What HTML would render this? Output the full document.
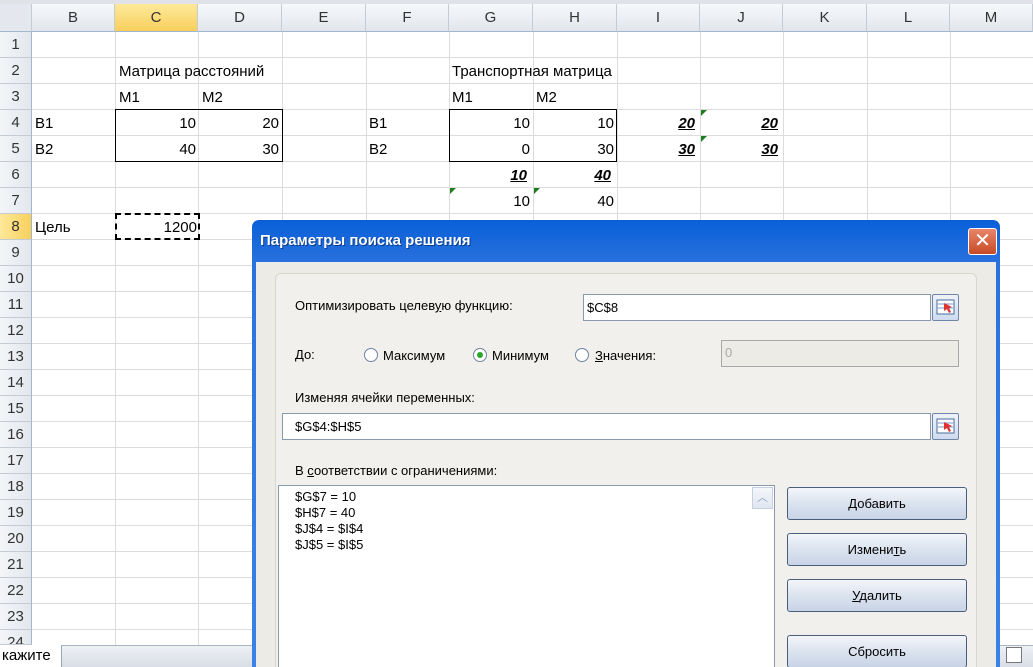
<!DOCTYPE html>
<html><head><meta charset="utf-8"><style>
*{box-sizing:border-box;margin:0;padding:0}
html,body{width:1033px;height:667px;overflow:hidden}
body{background:#fff;position:relative;font-family:"Liberation Sans","DejaVu Sans",sans-serif}
.a{position:absolute}
.hd{position:absolute;top:4px;height:28px;background:linear-gradient(#f6f8fb,#e2e6ec);border-right:1px solid #c5cbd3;border-bottom:1px solid #9eb6ce;font-size:15px;color:#333;text-align:center;line-height:28px}
.rn{position:absolute;left:0;width:32px;height:26px;background:linear-gradient(90deg,#f3f5f8,#e3e7ed);border-bottom:1px solid #c5cbd3;border-right:1px solid #9eb6ce;font-size:15px;color:#333;text-align:center;line-height:26px}
.vl{position:absolute;top:32px;height:613px;width:1px;background:#dadcdd}
.hl{position:absolute;left:32px;right:0;height:1px;background:#dadcdd}
.c{position:absolute;font-size:15px;color:#000;height:26px;line-height:27px;white-space:nowrap}
.r{text-align:right}
.bu{font-weight:bold;font-style:italic;text-decoration:underline}
.tri{position:absolute;width:0;height:0;border-top:6px solid #1e7b1e;border-right:6px solid transparent}
.d{font-family:"Liberation Sans Narrow","Liberation Sans",sans-serif;font-size:13px;color:#000;position:absolute;white-space:nowrap}
.inp{position:absolute;background:#fff;border:1px solid #8a9aae}
.btn{position:absolute;left:787px;width:180px;height:33px;border:1px solid #4a5e7c;border-radius:3px;background:linear-gradient(#f3f6fb,#dbe3ef 50%,#c8d4e6);text-align:center;line-height:31px}
.ico{position:absolute;width:27px;height:27px;border:1px solid #6f86a8;background:linear-gradient(#eef3fa,#cfdcee);border-radius:2px}
.rad{position:absolute;width:14px;height:14px;border:1px solid #6f84a0;border-radius:50%;background:#fff}
</style></head><body>
<div class="hd" style="left:0;width:32px;background:#e4e8ee"></div>
<div class="hd" style="left:32px;width:83px">B</div>
<div class="hd" style="left:115px;width:83px;background:linear-gradient(#fde99a,#f8cf5c)">C</div>
<div class="hd" style="left:198px;width:84px">D</div>
<div class="hd" style="left:282px;width:84px">E</div>
<div class="hd" style="left:366px;width:83px">F</div>
<div class="hd" style="left:449px;width:84px">G</div>
<div class="hd" style="left:533px;width:84px">H</div>
<div class="hd" style="left:617px;width:83px">I</div>
<div class="hd" style="left:700px;width:83px">J</div>
<div class="hd" style="left:783px;width:84px">K</div>
<div class="hd" style="left:867px;width:83px">L</div>
<div class="hd" style="left:950px;width:83px">M</div>
<div class="a" style="left:0;top:0;width:1033px;height:4px;background:#dfe3e8"></div>
<div class="vl" style="left:115px"></div><div class="vl" style="left:198px"></div><div class="vl" style="left:282px"></div><div class="vl" style="left:366px"></div><div class="vl" style="left:449px"></div><div class="vl" style="left:533px"></div><div class="vl" style="left:617px"></div><div class="vl" style="left:700px"></div><div class="vl" style="left:783px"></div><div class="vl" style="left:867px"></div><div class="vl" style="left:950px"></div>
<div class="hl" style="top:57px"></div><div class="hl" style="top:83px"></div><div class="hl" style="top:109px"></div><div class="hl" style="top:135px"></div><div class="hl" style="top:161px"></div><div class="hl" style="top:187px"></div><div class="hl" style="top:213px"></div><div class="hl" style="top:239px"></div><div class="hl" style="top:265px"></div><div class="hl" style="top:291px"></div><div class="hl" style="top:317px"></div><div class="hl" style="top:343px"></div><div class="hl" style="top:369px"></div><div class="hl" style="top:395px"></div><div class="hl" style="top:421px"></div><div class="hl" style="top:447px"></div><div class="hl" style="top:473px"></div><div class="hl" style="top:499px"></div><div class="hl" style="top:525px"></div><div class="hl" style="top:551px"></div><div class="hl" style="top:577px"></div><div class="hl" style="top:603px"></div><div class="hl" style="top:629px"></div>
<div class="rn" style="top:32px">1</div><div class="rn" style="top:58px">2</div><div class="rn" style="top:84px">3</div><div class="rn" style="top:110px">4</div><div class="rn" style="top:136px">5</div><div class="rn" style="top:162px">6</div><div class="rn" style="top:188px">7</div><div class="rn" style="top:214px;background:linear-gradient(90deg,#fde99a,#f8cf5c)">8</div><div class="rn" style="top:240px">9</div><div class="rn" style="top:266px">10</div><div class="rn" style="top:292px">11</div><div class="rn" style="top:318px">12</div><div class="rn" style="top:344px">13</div><div class="rn" style="top:370px">14</div><div class="rn" style="top:396px">15</div><div class="rn" style="top:422px">16</div><div class="rn" style="top:448px">17</div><div class="rn" style="top:474px">18</div><div class="rn" style="top:500px">19</div><div class="rn" style="top:526px">20</div><div class="rn" style="top:552px">21</div><div class="rn" style="top:578px">22</div><div class="rn" style="top:604px">23</div><div class="rn" style="top:630px;height:15px;line-height:26px;overflow:hidden">24</div>
<div class="c" style="left:119px;top:58px">Матрица расстояний</div>
<div class="c" style="left:119px;top:84px">M1</div><div class="c" style="left:202px;top:84px">M2</div>
<div class="c" style="left:35px;top:110px">B1</div><div class="c" style="left:35px;top:136px">B2</div>
<div class="a" style="left:115px;top:109px;width:168px;height:53px;border:1.5px solid #000"></div>
<div class="c r" style="left:115px;width:81px;top:110px">10</div><div class="c r" style="left:198px;width:81px;top:110px">20</div>
<div class="c r" style="left:115px;width:81px;top:136px">40</div><div class="c r" style="left:198px;width:81px;top:136px">30</div>
<div class="c" style="left:35px;top:214px">Цель</div>
<div class="a" style="left:115px;top:213px;width:85px;height:27px;border:2px dashed #000"></div>
<div class="c r" style="left:115px;width:82px;top:214px">1200</div>
<div class="c" style="left:452px;top:58px">Транспортная матрица</div>
<div class="c" style="left:452px;top:84px">M1</div><div class="c" style="left:536px;top:84px">M2</div>
<div class="c" style="left:369px;top:110px">B1</div><div class="c" style="left:369px;top:136px">B2</div>
<div class="a" style="left:449px;top:109px;width:168px;height:53px;border:1.5px solid #000"></div>
<div class="c r" style="left:449px;width:81px;top:110px">10</div><div class="c r" style="left:533px;width:81px;top:110px">10</div>
<div class="c r" style="left:449px;width:81px;top:136px">0</div><div class="c r" style="left:533px;width:81px;top:136px">30</div>
<div class="c r bu" style="left:617px;width:78px;top:110px">20</div><div class="c r bu" style="left:700px;width:78px;top:110px">20</div>
<div class="c r bu" style="left:617px;width:78px;top:136px">30</div><div class="c r bu" style="left:700px;width:78px;top:136px">30</div>
<div class="c r bu" style="left:449px;width:78px;top:162px">10</div><div class="c r bu" style="left:533px;width:78px;top:162px">40</div>
<div class="c r" style="left:449px;width:81px;top:188px">10</div><div class="c r" style="left:533px;width:81px;top:188px">40</div>
<div class="tri" style="left:701px;top:110px"></div><div class="tri" style="left:701px;top:136px"></div><div class="tri" style="left:450px;top:188px"></div><div class="tri" style="left:534px;top:188px"></div>
<div class="a" style="left:0;top:645px;width:1033px;height:22px;background:linear-gradient(#eef1f5,#d9dee6);border-top:1px solid #a9b5c4"></div>
<div class="a" style="left:0;top:645px;width:62px;height:22px;background:#fff;border-right:1px solid #9aa8ba;font-size:15px;line-height:22px;padding-left:2px">кажите</div>
<div class="a" style="left:1006px;top:647px;width:16px;height:16px;border:1px solid #777;background:#fff"></div>
<!-- dialog -->
<div class="a" style="left:252px;top:220px;width:748px;height:447px;border-radius:7px 7px 0 0;background:linear-gradient(#0a5fd8,#2a72de 10%,#3b82e6);"></div>
<div class="a" style="left:256px;top:262px;width:740px;height:405px;background:#ecebe6"></div>
<div class="d" style="left:260px;top:232px;font-size:15px;color:#fff;font-weight:bold;text-shadow:1px 1px #0b3a8a">Параметры поиска решения</div>
<div class="a" style="left:968px;top:228px;width:29px;height:27px;border:1px solid #fff;border-radius:3px;background:linear-gradient(#e8856a,#c84b25);color:#fff;font-size:20px;font-weight:bold;text-align:center;line-height:25px">✕</div>
<div class="a" style="left:275px;top:273px;width:702px;height:400px;border:1px solid #d8d6cf;border-radius:6px;background:#f1f0ec"></div>
<div class="d" style="left:295px;top:298px">Оптимизировать целев<u>у</u>ю функцию:</div>
<div class="inp" style="left:583px;top:294px;width:348px;height:27px"></div>
<div class="d" style="left:587px;top:300px">$C$8</div>
<div class="ico" style="left:932px;top:294px"><svg width="25" height="25"><rect x="4" y="5" width="17" height="14" fill="#fff" stroke="#4a6a9a"/><path d="M5 9h15M5 13h15" stroke="#7a9ac8"/><path d="M11 8l8 4-3 1 2 4-2 1-2-4-3 2z" fill="#d33"/></svg></div>
<div class="d" style="left:295px;top:347px">До:</div>
<div class="rad" style="left:364px;top:348px"></div><div class="d" style="left:383px;top:348px">Максимум</div>
<div class="rad" style="left:473px;top:348px"><div class="a" style="left:3px;top:3px;width:6px;height:6px;border-radius:50%;background:#2aa52a"></div></div><div class="d" style="left:492px;top:348px">Минимум</div>
<div class="rad" style="left:575px;top:348px"></div><div class="d" style="left:595px;top:348px"><u>З</u>начения:</div>
<div class="a" style="left:721px;top:340px;width:238px;height:27px;border:1px solid #a8a8a8;background:#ecebe6"></div>
<div class="d" style="left:725px;top:345px;color:#aaa">0</div>
<div class="d" style="left:295px;top:390px">Изменяя ячейки переменных:</div>
<div class="inp" style="left:282px;top:413px;width:649px;height:27px"></div>
<div class="d" style="left:295px;top:419px">$G$4:$H$5</div>
<div class="ico" style="left:932px;top:413px"><svg width="25" height="25"><rect x="4" y="5" width="17" height="14" fill="#fff" stroke="#4a6a9a"/><path d="M5 9h15M5 13h15" stroke="#7a9ac8"/><path d="M11 8l8 4-3 1 2 4-2 1-2-4-3 2z" fill="#d33"/></svg></div>
<div class="d" style="left:295px;top:463px">В <u>с</u>оответствии с ограничениями:</div>
<div class="inp" style="left:278px;top:485px;width:497px;height:190px"></div>
<div class="a" style="left:752px;top:487px;width:21px;height:22px;background:linear-gradient(#f4f6fa,#dfe6f1);border:1px solid #c6d0de;color:#8ea0bd;font-size:11px;text-align:center;line-height:20px">︿</div>
<div class="d" style="left:295px;top:489px;line-height:16px">$G$7 = 10<br>$H$7 = 40<br>$J$4 = $I$4<br>$J$5 = $I$5</div>
<div class="btn d" style="top:487px"><u>Д</u>обавить</div>
<div class="btn d" style="top:533px">Измени<u>т</u>ь</div>
<div class="btn d" style="top:579px"><u>У</u>далить</div>
<div class="btn d" style="top:635px">Сбросить</div>
</body></html>
